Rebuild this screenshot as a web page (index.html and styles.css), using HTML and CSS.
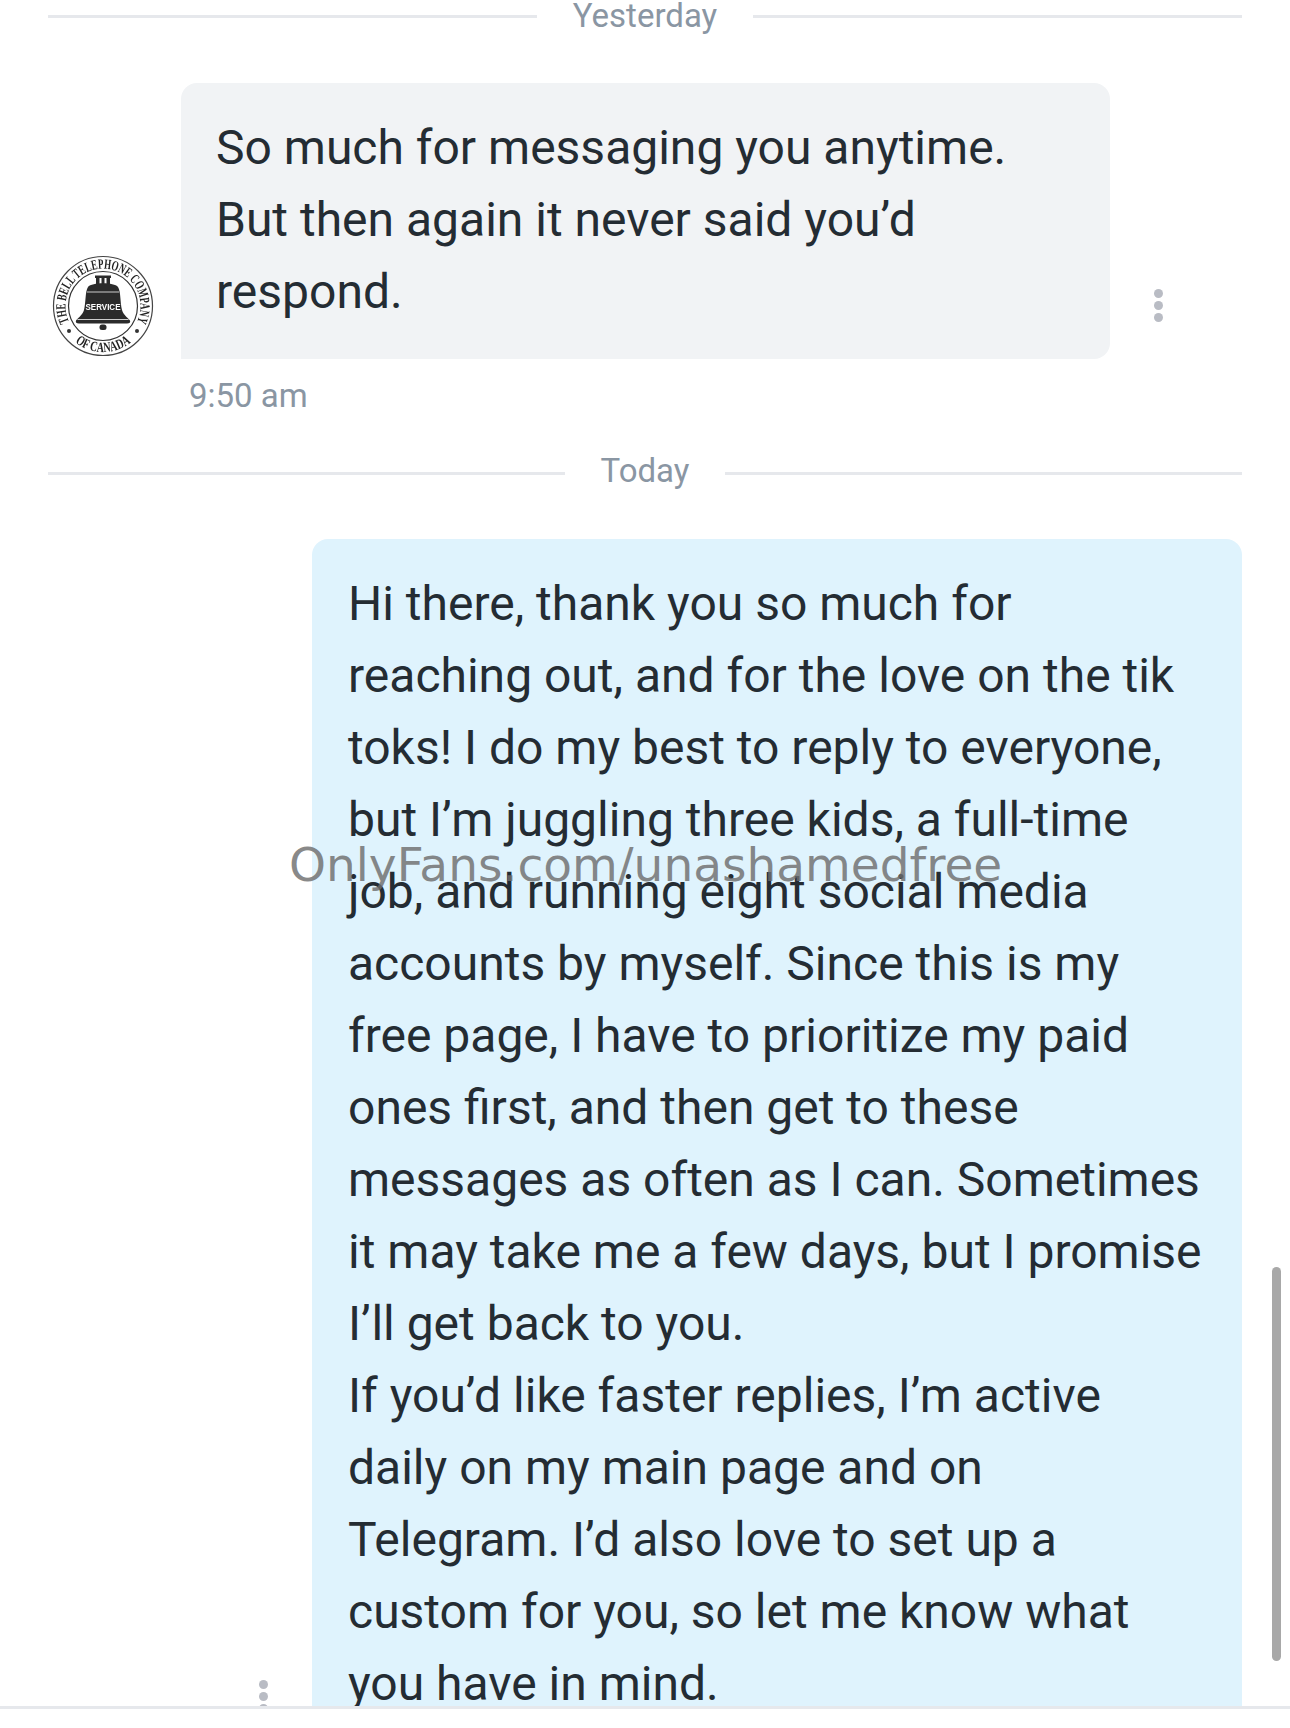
FILE: index.html
```html
<!DOCTYPE html>
<html lang="en">
<head>
<meta charset="utf-8">
<title>Chat</title>
<link rel="stylesheet" href="styles.css">
</head>
<body>
<main class="chat">
  <div class="divider divider-first"><span class="divider-label">Yesterday</span></div>

  <section class="message message-in">
    <svg class="avatar" viewBox="0 0 104 104" aria-label="The Bell Telephone Company of Canada">
      <defs>
        <path id="arcTop" d="M19.800 71.300 A37.500 37.500 0 1 1 84.200 71.300"/>
        <path id="arcBottom" d="M16.800 81.600 A46 46 0 0 0 87.200 81.600"/>
      </defs>
      <circle cx="52" cy="52" r="49.500" fill="#fff" stroke="#444" stroke-width="1.200"/>
      <circle cx="52" cy="52" r="34.500" fill="#fff" stroke="#333" stroke-width="1.200"/>
      <text class="seal-text"><textPath href="#arcTop" startOffset="50%" text-anchor="middle" textLength="150" lengthAdjust="spacingAndGlyphs">THE BELL TELEPHONE COMPANY</textPath></text>
      <text class="seal-text"><textPath href="#arcBottom" startOffset="50%" text-anchor="middle" textLength="60" lengthAdjust="spacingAndGlyphs">OF CANADA</textPath></text>
      <circle cx="18" cy="77" r="2" fill="#333"/>
      <circle cx="86" cy="77" r="2" fill="#333"/>
      <path d="M45 24h3.500v6h-3.500zM50.500 23h3v7h-3zM55.500 24h3.500v6h-3.500zM44 21.500h16v2.500H44z" fill="#2b2b2b"/>
      <path d="M37 33 C41 28 63 28 67 33 C70 38 69 48 71 56 C72.500 61 76 63 79 66.500 Q80 69.500 76 69.500 H28 Q24 69.500 25 66.500 C28 63 31.500 61 33 56 C35 48 34 38 37 33 Z" fill="#2b2b2b"/>
      <path d="M36 38 H68 M26.500 65.500 H77.500" stroke="#ccc" stroke-width="1"/>
      <rect x="48.500" y="70.500" width="7" height="5.500" rx="2.500" fill="#2b2b2b"/>
      <text class="seal-service" x="52" y="56" text-anchor="middle" textLength="35" lengthAdjust="spacingAndGlyphs">SERVICE</text>
    </svg>
    <p class="bubble bubble-in">So much for messaging you anytime.<br>But then again it never said you’d<br>respond.</p>
    <span class="kebab kebab-in"><i></i><i></i><i></i></span>
  </section>
  <div class="time">9:50 am</div>

  <div class="divider divider-today"><span class="divider-label">Today</span></div>

  <section class="message message-out">
    <span class="kebab kebab-out"><i></i><i></i><i></i></span>
    <p class="bubble bubble-out">Hi there, thank you so much for<br>reaching out, and for the love on the tik<br>toks! I do my best to reply to everyone,<br>but I’m juggling three kids, a full-time<br>job, and running eight social media<br>accounts by myself. Since this is my<br>free page, I have to prioritize my paid<br>ones first, and then get to these<br>messages as often as I can. Sometimes<br>it may take me a few days, but I promise<br>I’ll get back to you.<br>If you’d like faster replies, I’m active<br>daily on my main page and on<br>Telegram. I’d also love to set up a<br>custom for you, so let me know what<br>you have in mind.</p>
  </section>

  <div class="scrollbar"></div>
  <div class="watermark">OnlyFans.com/unashamedfree</div>
</main>
</body>
</html>
```
FILE: styles.css
```css
* { box-sizing: border-box; }
html, body { margin: 0; padding: 0; background: #fff; }
body { width: 1290px; height: 1728px; overflow: hidden; font-family: Roboto, "Liberation Sans", sans-serif; color: #242c33; }

.chat {
  position: relative;
  height: 1709px;
  padding: 0 48px;
  overflow: hidden;
  border-bottom: 3px solid #e6e8ec;
}

.divider { display: flex; align-items: center; gap: 36px; height: 33px; color: #8a96a3; font-size: 33px; line-height: 33px; }
.divider::before, .divider::after { content: ""; flex: 1; height: 3px; background: #e6e8ec; }
.divider-today { margin-top: 43px; }
.divider-label { position: relative; top: -1px; }
.divider-today .divider-label { top: -3px; }

.message { display: flex; }
.message-in { margin-top: 50px; align-items: flex-end; }
.message-out { margin-top: 49px; justify-content: flex-end; }

.avatar { flex: none; width: 104px; height: 104px; margin: 0 27px 1px 3px; filter: blur(0.35px); }
.seal-text { font-family: "Liberation Serif", serif; font-weight: 700; font-size: 14px; fill: #222; }
.seal-service { font-family: "Liberation Sans", sans-serif; font-weight: 700; font-size: 9.500px; fill: #fff; }

.bubble { margin: 0; font-size: 48px; line-height: 72px; }
.bubble-in { width: 929px; height: 276px; margin-left: -1px; padding: 29px 35px 29px; background: #f1f3f5; border-radius: 16px 16px 16px 0; }
.bubble-out { width: 930px; padding: 29px 36px 28px; background: #dff3fd; border-radius: 16px 16px 0 0; }

.kebab { display: flex; flex-direction: column; gap: 3px; width: 10px; }
.kebab i { display: block; width: 9px; height: 9px; border-radius: 50%; background: #b9bcc4; }
.kebab-in { margin: 0 0 37px 44px; }
.kebab-out { align-self: flex-end; margin: 0 43px 35px 0; }

.time { margin: 19px 0 0 141px; font-size: 33px; line-height: 36px; color: #8a96a3; }

.scrollbar { position: absolute; left: 1272px; top: 1267px; width: 9px; height: 394px; border-radius: 5px; background: #a8a8a8; }
.watermark { position: absolute; left: 289px; top: 835px; font-family: "DejaVu Sans", sans-serif; font-size: 47px; line-height: 60px; color: rgba(110, 110, 110, 0.82); white-space: nowrap; }
```
